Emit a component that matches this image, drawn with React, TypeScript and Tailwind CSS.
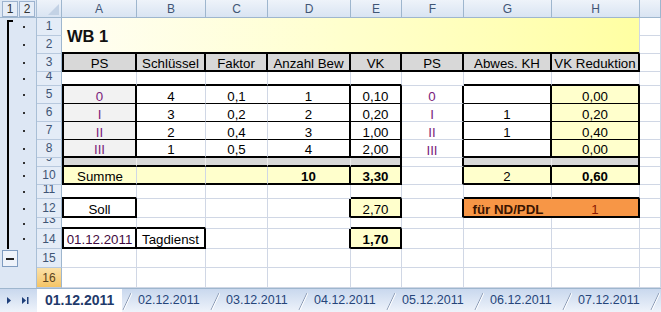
import React from "react";

type BT = "g" | "k" | "K" | "n" | "w";
type C = {
  t?: string;
  c?: string;
  al?: string;
  sz?: string;
  r?: BT;
  b?: BT;
  l?: BT;
  span?: number;
  rs?: number;
};

const RB: Record<BT, string> = {
  g: "border-r border-r-[#d0d7e5]",
  k: "border-r border-r-black",
  K: "border-r-2 border-r-black",
  n: "border-r-0",
  w: "border-r border-r-[#ececec]",
};
const BB: Record<BT, string> = {
  g: "border-b border-b-[#d0d7e5]",
  k: "border-b border-b-black",
  K: "border-b-2 border-b-black",
  n: "border-b-0",
  w: "border-b border-b-[#ececec]",
};
const LB: Record<BT, string> = {
  g: "",
  k: "border-l border-l-black",
  K: "border-l-2 border-l-black",
  n: "",
  w: "",
};

const Y = "bg-[#ffffcc]";
const GR = "bg-[#d8d8d8]";
const LG = "bg-[#f2f2f2]";
const PU = "text-[#7b1c7b]";
const OR = "bg-[#f79646]";

const blank = (): C[] => Array.from({ length: 9 }, () => ({}));

function buildRows(): C[][] {
  const rows: C[][] = [];
  rows.push([
    {
      t: "WB 1",
      span: 8,
      rs: 2,
      c: "bg-linear-to-r from-[#fffef4] via-[#ffffcc] to-[#ffffa2] font-bold text-[#111]",
      sz: "text-[16.5px]",
      al: "justify-start pl-[5px]",
      r: "g",
      b: "K",
    },
    {},
  ]);
  rows.push([{}]);
  const heads = ["PS", "Schlüssel", "Faktor", "Anzahl Bew", "VK", "PS", "Abwes. KH", "VK Reduktion"];
  rows.push([
    ...heads.map((t, i) => ({ t, c: GR, r: "K" as BT, b: "K" as BT, l: i === 0 ? ("K" as BT) : undefined })),
    {},
  ]);
  rows.push((["K", "K", "K", "K", "K", "g", "K", "K", "g"] as BT[]).map((b) => ({ b })));
  const A = ["0", "I", "II", "III"];
  const B = ["4", "3", "2", "1"];
  const Cc = ["0,1", "0,2", "0,4", "0,5"];
  const D = ["1", "2", "3", "4"];
  const E = ["0,10", "0,20", "1,00", "2,00"];
  const G = ["", "1", "1", ""];
  const H = ["0,00", "0,20", "0,40", "0,00"];
  for (let i = 0; i < 4; i++) {
    const bb: BT = i === 3 ? "K" : "k";
    rows.push([
      { t: A[i], c: `${LG} ${PU}`, l: "K", r: "K", b: bb },
      { t: B[i], r: "g", b: bb },
      { t: Cc[i], r: "g", b: bb },
      { t: D[i], r: "K", b: bb },
      { t: E[i], r: "K", b: bb },
      { t: A[i], c: PU, r: "K" },
      { t: G[i], r: "K", b: bb },
      { t: H[i], c: Y, r: "K", b: bb },
      {},
    ]);
  }
  rows.push([
    { c: GR, l: "K", r: "w", b: "K" },
    { c: GR, r: "w", b: "K" },
    { c: GR, r: "w", b: "K" },
    { c: GR, r: "w", b: "K" },
    { c: GR, r: "K", b: "K" },
    { r: "K" },
    { c: GR, r: "w", b: "K" },
    { c: GR, r: "K", b: "K" },
    {},
  ]);
  rows.push([
    { t: "Summe", c: Y, l: "K", r: "g", b: "K" },
    { c: Y, r: "g", b: "K" },
    { c: Y, r: "g", b: "K" },
    { t: "10", c: `${Y} font-bold`, r: "K", b: "K" },
    { t: "3,30", c: `${Y} font-bold`, r: "K", b: "K" },
    { r: "K" },
    { t: "2", c: Y, r: "K", b: "K" },
    { t: "0,60", c: `${Y} font-bold`, r: "K", b: "K" },
    {},
  ]);
  rows.push([{ b: "K" }, {}, {}, {}, { b: "K" }, {}, { b: "K" }, { b: "K" }, {}]);
  rows.push([
    { t: "Soll", l: "K", r: "K", b: "K" },
    {},
    {},
    { r: "K" },
    { t: "2,70", c: Y, r: "K", b: "K" },
    { r: "K" },
    { t: "für ND/PDL", c: `${OR} font-bold text-[#3a1400]`, r: "n", b: "K" },
    { t: "1", c: `${OR} text-[#8a1800]`, r: "K", b: "K" },
    {},
  ]);
  rows.push([{ b: "K" }, { b: "K" }, {}, {}, { b: "K" }, {}, {}, {}, {}]);
  rows.push([
    { t: "01.12.2011", c: "text-[#3f0a40]", l: "K", r: "K", b: "K" },
    { t: "Tagdienst", r: "K", b: "K" },
    {},
    { r: "K" },
    { t: "1,70", c: `${Y} font-bold`, r: "K", b: "K" },
    {},
    {},
    {},
    {},
  ]);
  rows.push(blank());
  rows.push(blank());
  return rows;
}

function Cell({ d }: { d: C }) {
  const r = d.r ?? "g";
  const b = d.b ?? "g";
  const cls = [
    "flex items-center overflow-hidden whitespace-nowrap leading-[15px] pt-[3px]",
    d.sz ?? "text-[13.3px]",
    d.al ?? "justify-center",
    RB[r],
    BB[b],
    d.l ? LB[d.l] : "",
    d.span === 8 ? "col-span-8" : "",
    d.rs === 2 ? "row-span-2" : "",
    d.c ?? "",
  ].join(" ");
  return <div className={cls}>{d.t}</div>;
}

function Outline({ i }: { i: number }) {
  const base = "bg-[#dde7f4] border-r border-r-[#a9bfd6]";
  if (i === 15)
    return (
      <div className={`${base} flex items-center pl-[2px]`}>
        <div className="w-[16px] h-[17px] border border-[#7f9cc0] bg-[#eef3fa] flex items-center justify-center">
          <div className="w-[8px] h-[2px] bg-[#222]" />
        </div>
      </div>
    );
  if (i === 16) return <div className={base} />;
  return (
    <div className={`${base} flex items-center`}>
      <div
        className={`ml-[7px] w-[6px] self-stretch border-l-2 border-l-black ${
          i === 1 ? "mt-[2px] border-t-2 border-t-black" : ""
        }`}
      />
      <div className="ml-[10px] w-[2px] h-[2px] bg-[#333]" />
    </div>
  );
}

function RowHead({ i }: { i: number }) {
  const bg = i === 16 ? "bg-linear-to-b from-[#fbe1a8] to-[#f5c565] text-[#5a4320]" : "bg-[#e4ecf7] text-[#3f5575]";
  return (
    <div
      className={`flex items-end justify-center pb-[2px] overflow-hidden border-r border-r-[#9eb6ce] border-b border-b-[#b8c9de] text-[12px] leading-[13px] ${bg}`}
    >
      {i}
    </div>
  );
}

function Slash() {
  return (
    <svg width="10" height="23" viewBox="0 0 10 23" className="shrink-0">
      <line x1="1" y1="21" x2="9" y2="4" stroke="#8797b2" strokeWidth="1" />
      <line x1="2" y1="21" x2="10" y2="4" stroke="#ffffff" strokeWidth="1" />
    </svg>
  );
}

function TabBar() {
  const tabs = ["02.12.2011", "03.12.2011", "04.12.2011", "05.12.2011", "06.12.2011", "07.12.2011"];
  return (
    <div className="h-[24px] flex bg-linear-to-b from-[#c9d8ee] to-[#eef3fa] border-t border-t-[#9eb6ce]">
      <div className="w-[37px] flex items-center">
        <svg width="37" height="23" viewBox="0 0 37 23">
          <polygon points="7,8 11,11.5 7,15" fill="#1f3f7a" />
          <polygon points="22,8 26,11.5 22,15" fill="#1f3f7a" />
          <rect x="27" y="8" width="1.5" height="7" fill="#1f3f7a" />
        </svg>
      </div>
      <div className="w-[85px] bg-white flex items-center pl-[8px] text-[14px] font-bold text-[#1f3a6b]">01.12.2011</div>
      {tabs.map((t) => (
        <div key={t} className="w-[88px] flex items-center">
          <Slash />
          <span className="pl-[6px] text-[12.5px] text-[#26457a]">{t}</span>
        </div>
      ))}
      <div className="flex items-center">
        <Slash />
      </div>
    </div>
  );
}

export default function App() {
  const rows = buildRows();
  const letters = ["A", "B", "C", "D", "E", "F", "G", "H", ""];
  return (
    <div className="w-[661px] h-[312px] overflow-hidden bg-white flex flex-col text-black font-['Liberation_Sans',Arial,sans-serif]">
      <div className="h-[288px] grid grid-cols-[37px_25px_75px_69px_62px_83px_51px_62px_88px_88px_21px] grid-rows-[18px_18px_18px_18px_14px_18px_18px_18px_18px_9px_18px_14px_19px_11px_20px_19px_20px]">
        <div className="bg-[#dde7f4] border-r border-r-[#a9bfd6] border-b border-b-[#9eb6ce] flex items-center gap-[1px] pl-[2px]">
          <div className="w-[16px] h-[16px] border border-[#9db3cf] bg-[#e6edf7] flex items-center justify-center text-[12px] text-[#333]">
            1
          </div>
          <div className="w-[16px] h-[16px] border border-[#9db3cf] bg-[#e6edf7] flex items-center justify-center text-[12px] text-[#333]">
            2
          </div>
        </div>
        <div className="bg-linear-to-b from-[#eef3fa] to-[#d9e4f2] border-r border-r-[#9eb6ce] border-b border-b-[#9eb6ce]">
          <svg width="24" height="17" viewBox="0 0 24 17">
            <polygon points="22,4 22,15 11,15" fill="#c3d2e5" />
          </svg>
        </div>
        {letters.map((l, i) => (
          <div
            key={i}
            className="bg-linear-to-b from-[#eef3fa] to-[#d9e4f2] border-r border-r-[#9eb6ce] border-b border-b-[#9eb6ce] flex items-center justify-center text-[12px] text-[#3f5575]"
          >
            {l}
          </div>
        ))}
        {rows.map((cells, ri) => {
          const i = ri + 1;
          return (
            <React.Fragment key={i}>
              <Outline i={i} />
              <RowHead i={i} />
              {cells.map((d, ci) => (
                <Cell key={ci} d={d} />
              ))}
            </React.Fragment>
          );
        })}
      </div>
      <TabBar />
    </div>
  );
}
